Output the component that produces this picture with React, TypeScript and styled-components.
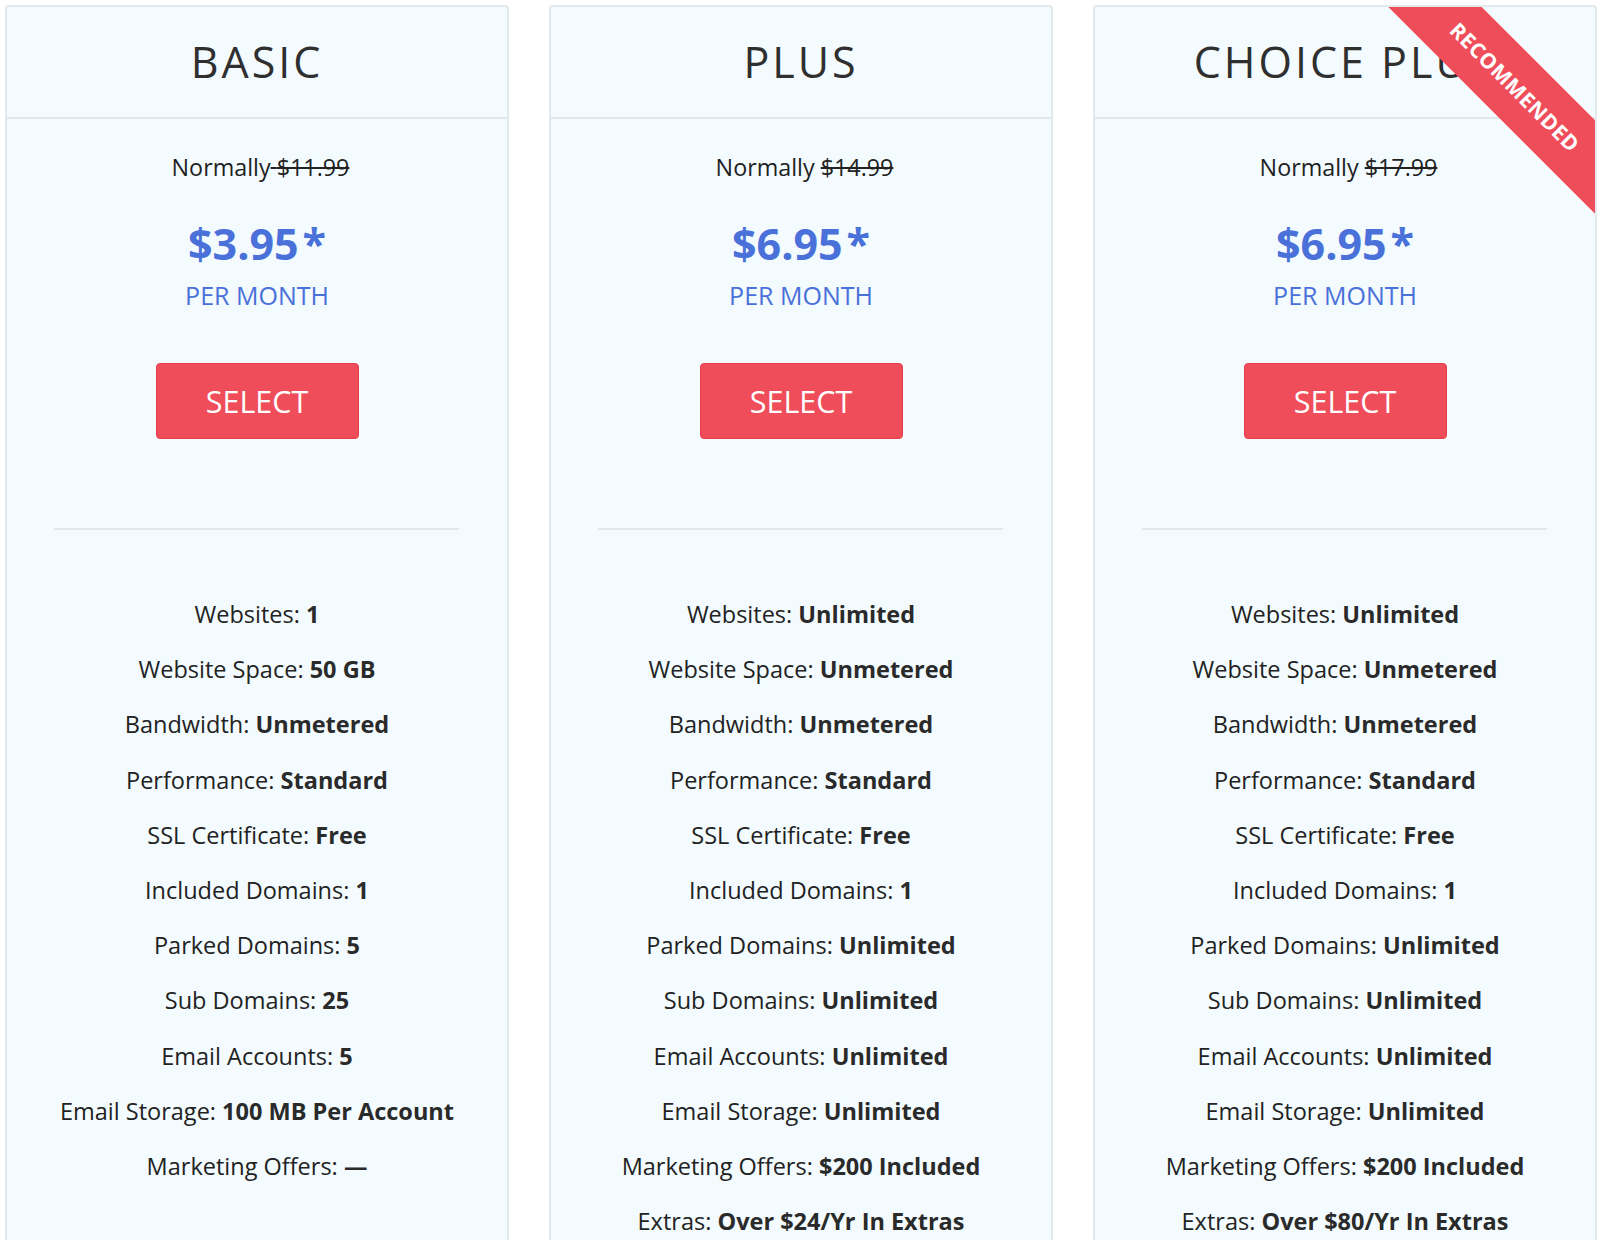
import React from "react";
import styled, { createGlobalStyle } from "styled-components";

const GlobalStyle = createGlobalStyle`
  html, body { margin: 0; padding: 0; background: #ffffff; }
  body { font-family: "Open Sans", "Noto Sans", Arial, sans-serif; color: #333333; }
  * { box-sizing: border-box; }
`;

const Page = styled.div`
  display: grid;
  grid-template-columns: repeat(3, 504px);
  column-gap: 40px;
  padding: 5px 0 0 5px;
  height: 1240px;
  overflow: hidden;
`;

const Card = styled.section`
  position: relative;
  overflow: hidden;
  background: #f3fbfe;
  border: 2px solid #e2eaed;
  border-radius: 4px;
  height: 1400px;
  display: flex;
  flex-direction: column;
`;

const Header = styled.header`
  height: 112px;
  border-bottom: 2px solid #e0e8eb;
  display: flex;
  align-items: center;
  justify-content: center;
`;

const Title = styled.h2`
  margin: 0;
  padding-bottom: 2px;
  font-size: 43px;
  font-weight: 500;
  letter-spacing: 3px;
  color: #2f2f2f;
  text-transform: uppercase;
`;

const Body = styled.div`
  display: flex;
  flex-direction: column;
  align-items: center;
  padding-top: 32px;
`;

const Normally = styled.p`
  margin: 0;
  padding-left: 7px;
  font-size: 23.3px;
  line-height: 33px;
  color: #222222;
`;

const Struck = styled.span`
  text-decoration: line-through;
`;

const Price = styled.div`
  margin-top: 34px;
  font-size: 43px;
  line-height: 52px;
  font-weight: 700;
  color: #4a70d9;
`;

const Star = styled.span`
  margin-left: 4px;
`;

const PerMonth = styled.div`
  margin-top: 10px;
  font-size: 25px;
  line-height: 30px;
  color: #4a70d9;
`;

const SelectButton = styled.button`
  margin-top: 53px;
  width: 203px;
  height: 76px;
  border: 1px solid #e93b4a;
  border-radius: 4px;
  background: #ef4d5a;
  color: #ffffff;
  font-family: "Open Sans", "Noto Sans", Arial, sans-serif;
  font-size: 30.5px;
  cursor: pointer;
`;

const Divider = styled.hr`
  align-self: stretch;
  margin: 89px 48px 0 47px;
  border: 0;
  border-top: 2px solid #e1e8eb;
`;

const Features = styled.ul`
  list-style: none;
  margin: 68px 0 0;
  padding: 0;
  display: flex;
  flex-direction: column;
  align-items: center;
  gap: 22.2px;
`;

const Feature = styled.li`
  font-size: 23.5px;
  line-height: 33px;
  color: #222222;
  white-space: nowrap;
`;

const Value = styled.strong`
  font-weight: 700;
  color: #2a2a2a;
`;

const Ribbon = styled.div`
  position: absolute;
  top: 47px;
  right: -70px;
  width: 300px;
  height: 66px;
  background: #ef4d5a;
  transform: rotate(45deg);
  display: flex;
  align-items: center;
  justify-content: center;
  color: #ffffff;
  font-size: 21px;
  font-weight: 700;
  letter-spacing: 0.5px;
  text-transform: uppercase;
`;

type Plan = {
  name: string;
  normal: string;
  strikeSpace?: boolean;
  price: string;
  recommended?: boolean;
  features: [string, string][];
};

const plans: Plan[] = [
  {
    name: "Basic",
    normal: "$11.99",
    strikeSpace: true,
    price: "$3.95",
    features: [
      ["Websites", "1"],
      ["Website Space", "50 GB"],
      ["Bandwidth", "Unmetered"],
      ["Performance", "Standard"],
      ["SSL Certificate", "Free"],
      ["Included Domains", "1"],
      ["Parked Domains", "5"],
      ["Sub Domains", "25"],
      ["Email Accounts", "5"],
      ["Email Storage", "100 MB Per Account"],
      ["Marketing Offers", "—"],
    ],
  },
  {
    name: "Plus",
    normal: "$14.99",
    price: "$6.95",
    features: [
      ["Websites", "Unlimited"],
      ["Website Space", "Unmetered"],
      ["Bandwidth", "Unmetered"],
      ["Performance", "Standard"],
      ["SSL Certificate", "Free"],
      ["Included Domains", "1"],
      ["Parked Domains", "Unlimited"],
      ["Sub Domains", "Unlimited"],
      ["Email Accounts", "Unlimited"],
      ["Email Storage", "Unlimited"],
      ["Marketing Offers", "$200 Included"],
      ["Extras", "Over $24/Yr In Extras"],
    ],
  },
  {
    name: "Choice Plus",
    normal: "$17.99",
    price: "$6.95",
    recommended: true,
    features: [
      ["Websites", "Unlimited"],
      ["Website Space", "Unmetered"],
      ["Bandwidth", "Unmetered"],
      ["Performance", "Standard"],
      ["SSL Certificate", "Free"],
      ["Included Domains", "1"],
      ["Parked Domains", "Unlimited"],
      ["Sub Domains", "Unlimited"],
      ["Email Accounts", "Unlimited"],
      ["Email Storage", "Unlimited"],
      ["Marketing Offers", "$200 Included"],
      ["Extras", "Over $80/Yr In Extras"],
    ],
  },
];

export default function App() {
  return (
    <>
      <GlobalStyle />
      <Page>
        {plans.map((plan) => (
          <Card key={plan.name}>
            {plan.recommended && <Ribbon>Recommended</Ribbon>}
            <Header>
              <Title>{plan.name}</Title>
            </Header>
            <Body>
              <Normally>
                {plan.strikeSpace ? (
                  <>
                    Normally<Struck> {plan.normal}</Struck>
                  </>
                ) : (
                  <>
                    Normally <Struck>{plan.normal}</Struck>
                  </>
                )}
              </Normally>
              <Price>
                {plan.price}
                <Star>*</Star>
              </Price>
              <PerMonth>PER MONTH</PerMonth>
              <SelectButton type="button">SELECT</SelectButton>
              <Divider />
              <Features>
                {plan.features.map(([label, value]) => (
                  <Feature key={label}>
                    {label}: <Value>{value}</Value>
                  </Feature>
                ))}
              </Features>
            </Body>
          </Card>
        ))}
      </Page>
    </>
  );
}
